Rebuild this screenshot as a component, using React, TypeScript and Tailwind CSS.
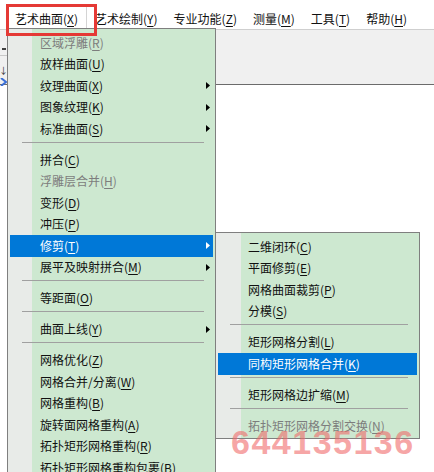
type Item = { t: string; k: string; dis?: boolean; sub?: boolean; active?: boolean } | "sep"

const mainItems: Item[] = [
  { t: "区域浮雕", k: "R", dis: true },
  { t: "放样曲面", k: "U" },
  { t: "纹理曲面", k: "X", sub: true },
  { t: "图象纹理", k: "K", sub: true },
  { t: "标准曲面", k: "S", sub: true },
  "sep",
  { t: "拼合", k: "C" },
  { t: "浮雕层合并", k: "H", dis: true },
  { t: "变形", k: "D" },
  { t: "冲压", k: "P" },
  { t: "修剪", k: "T", sub: true, active: true },
  { t: "展平及映射拼合", k: "M", sub: true },
  "sep",
  { t: "等距面", k: "O" },
  "sep",
  { t: "曲面上线", k: "Y", sub: true },
  "sep",
  { t: "网格优化", k: "Z" },
  { t: "网格合并/分离", k: "W" },
  { t: "网格重构", k: "B" },
  { t: "旋转面网格重构", k: "A" },
  { t: "拓扑矩形网格重构", k: "R" },
  { t: "拓扑矩形网格重构包裹", k: "B" },
]

const subItems: Item[] = [
  { t: "二维闭环", k: "C" },
  { t: "平面修剪", k: "E" },
  { t: "网格曲面裁剪", k: "P" },
  { t: "分模", k: "S" },
  "sep",
  { t: "矩形网格分割", k: "L" },
  { t: "同构矩形网格合并", k: "K", active: true },
  "sep",
  { t: "矩形网格边扩缩", k: "M" },
  "sep",
  { t: "拓扑矩形网格分割交换", k: "N", dis: true },
]

const menuBar = [
  { t: "艺术曲面", k: "X" },
  { t: "艺术绘制", k: "Y" },
  { t: "专业功能", k: "Z" },
  { t: "测量", k: "M" },
  { t: "工具", k: "T" },
  { t: "帮助", k: "H" },
]

const Label = ({ t, k }: { t: string; k: string }) => (
  <span className="whitespace-nowrap">
    {t}(<span className="underline underline-offset-2">{k}</span>)
  </span>
)

const Arrow = ({ white }: { white?: boolean }) => (
  <svg width="4" height="7" viewBox="0 0 4 7" className="shrink-0">
    <path d="M0 0L4 3.5L0 7z" fill={white ? "#ffffff" : "#000000"} />
  </svg>
)

const MenuRows = ({ items }: { items: Item[] }) => (
  <>
    {items.map((item, i) => {
      if (item === "sep") {
        return (
          <div key={i} className="h-[9.5px] pt-[2px] ml-[14px] mr-[11px]">
            <div className="h-px bg-[#a0a0a0]" />
          </div>
        )
      }
      return (
        <div
          key={i}
          className={
            "h-[21.5px] mx-[2px] pl-[30px] pr-[3px] flex items-center justify-between " +
            (item.active ? "bg-[#0078d7] text-white" : item.dis ? "text-[#7d7d7d]" : "text-[#111]")
          }
        >
          <Label t={item.t} k={item.k} />
          {item.sub && <Arrow white={item.active} />}
        </div>
      )
    })}
  </>
)

export default function App() {
  return (
    <div className="relative w-[434px] h-[472px] overflow-hidden bg-white text-[12px] leading-none font-['Noto_Sans_CJK_SC','Liberation_Sans',sans-serif]">
      {/* menu bar */}
      <div className="h-[29px] flex items-end pl-[6px] bg-white">
        {menuBar.map((m, i) => (
          <div
            key={m.t}
            className={
              "px-[8px] h-[23px] pt-[2px] flex items-center text-[#111] " +
              (i === 0 ? "border-l border-t border-r border-l-[#8c8c8c] border-t-[#8c8c8c] border-r-[#d4d4d4]" : "")
            }
          >
            <Label t={m.t} k={m.k} />
          </div>
        ))}
      </div>

      {/* toolbar band */}
      <div className="h-[56px] border-t border-t-[#cfcfcf] border-b border-b-[#6b6b6b] bg-[#f0f0f0]">
        <div className="w-[7px] flex flex-col items-center pt-[18px] gap-[3px]">
          <div className="w-[4px] h-[2px] bg-[#404040]" />
          <div className="w-[7px] h-px bg-[#c8c8c8] mt-[2px]" />
          <div className="text-[9px] leading-none text-[#303030] mt-[7px]">↓</div>
          <svg width="7" height="8" viewBox="0 0 7 8">
            <path d="M1 0L6 4L1 8" fill="none" stroke="#3b6fd6" strokeWidth="2" />
          </svg>
        </div>
      </div>

      {/* main dropdown */}
      <div className="absolute left-[7px] top-[28px] w-[209px] h-[460px] border border-[#7f7f7f] pt-[3px] bg-[linear-gradient(to_right,#e8ebe8_24px,#cde8d0_24px)]">
        <MenuRows items={mainItems} />
      </div>

      {/* submenu */}
      <div className="absolute left-[215px] top-[232px] w-[205px] border border-[#7f7f7f] pt-[3px] pb-[1px] bg-[linear-gradient(to_right,#e8ebe8_25px,#cde8d0_25px)]">
        <MenuRows items={subItems} />
      </div>

      {/* highlight frame */}
      <div className="absolute left-[6px] top-[4px] w-[91px] h-[32px] border-[3px] border-[#e53935]" />

      {/* watermark */}
      <div className="absolute left-[231px] top-[425px] text-[34px] leading-none font-bold tracking-[1.5px] text-[#f06a6a]/60 font-['Liberation_Sans',sans-serif] pointer-events-none">
        644135136
      </div>
    </div>
  )
}
